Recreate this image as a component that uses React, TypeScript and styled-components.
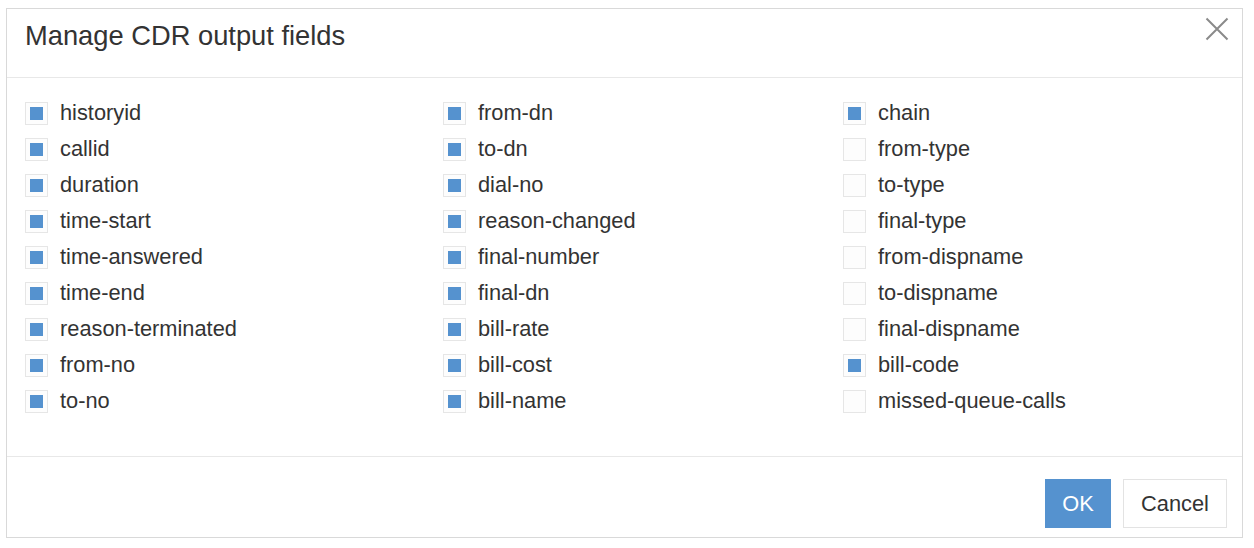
import React from "react";
import styled, { createGlobalStyle } from "styled-components";

const Global = createGlobalStyle`
  html, body { margin: 0; padding: 0; background: #fff; }
  body { font-family: "Liberation Sans", Arial, sans-serif; color: #333; }
`;

const Page = styled.div`
  padding: 8px 0 0 6px;
`;

const Dialog = styled.div`
  width: 1235px;
  height: 528px;
  border: 1px solid #d9d9d9;
  background: #fff;
  display: flex;
  flex-direction: column;
`;

const Header = styled.div`
  height: 69px;
  flex: none;
  box-sizing: border-box;
  border-bottom: 1px solid #e8e8e8;
  display: flex;
  align-items: flex-start;
  justify-content: space-between;
  padding: 11px 13px 0 18px;
`;

const Title = styled.h1`
  margin: 0;
  font-size: 27.3px;
  font-weight: normal;
  line-height: 32px;
  color: #333;
`;

const Close = styled.button`
  border: 0;
  background: none;
  padding: 0;
  margin-top: -3px;
  width: 24px;
  height: 24px;
  cursor: pointer;
  display: flex;
`;

const Body = styled.div`
  flex: 1;
  box-sizing: border-box;
  border-bottom: 1px solid #e8e8e8;
  padding: 17px 18px 0 18px;
  display: grid;
  grid-template-columns: 418px 400px 1fr;
  grid-auto-flow: column;
  grid-template-rows: repeat(9, 36px);
  align-content: start;
`;

const Item = styled.label`
  display: flex;
  align-items: center;
  gap: 12px;
  font-size: 21.8px;
  color: #333;
  cursor: pointer;
`;

const Box = styled.span<{ $on: boolean }>`
  width: 23px;
  height: 23px;
  box-sizing: border-box;
  border: 1px solid #e6e6e6;
  background: #fdfdfd;
  display: flex;
  align-items: center;
  justify-content: center;
  flex: none;
  &::after {
    content: "";
    width: 13px;
    height: 13px;
    background: ${(p) => (p.$on ? "#5592cf" : "transparent")};
  }
`;

const Footer = styled.div`
  height: 80px;
  flex: none;
  display: flex;
  justify-content: flex-end;
  align-items: flex-start;
  gap: 12px;
  padding: 22px 15px 0 0;
  box-sizing: border-box;
`;

const Button = styled.button<{ $primary?: boolean }>`
  height: 49px;
  padding: 0 ${(p) => (p.$primary ? "16px" : "17px")};
  font-family: "Liberation Sans", Arial, sans-serif;
  font-size: 21.8px;
  border: 1px solid ${(p) => (p.$primary ? "#5592cf" : "#e3e3e3")};
  background: ${(p) => (p.$primary ? "#5592cf" : "#fff")};
  color: ${(p) => (p.$primary ? "#fff" : "#333")};
  cursor: pointer;
  min-width: ${(p) => (p.$primary ? "66px" : "104px")};
`;

const fields: [string, boolean][] = [
  ["historyid", true],
  ["callid", true],
  ["duration", true],
  ["time-start", true],
  ["time-answered", true],
  ["time-end", true],
  ["reason-terminated", true],
  ["from-no", true],
  ["to-no", true],
  ["from-dn", true],
  ["to-dn", true],
  ["dial-no", true],
  ["reason-changed", true],
  ["final-number", true],
  ["final-dn", true],
  ["bill-rate", true],
  ["bill-cost", true],
  ["bill-name", true],
  ["chain", true],
  ["from-type", false],
  ["to-type", false],
  ["final-type", false],
  ["from-dispname", false],
  ["to-dispname", false],
  ["final-dispname", false],
  ["bill-code", true],
  ["missed-queue-calls", false],
];

export default function App() {
  const [state, setState] = React.useState(fields);
  return (
    <Page>
      <Global />
      <Dialog>
        <Header>
          <Title>Manage CDR output fields</Title>
          <Close aria-label="Close">
            <svg width="24" height="24" viewBox="0 0 24 24">
              <path d="M1.5 1.5 L22.5 22.5 M22.5 1.5 L1.5 22.5" stroke="#8a8a8a" strokeWidth="2" fill="none" />
            </svg>
          </Close>
        </Header>
        <Body>
          {state.map(([name, on], i) => (
            <Item
              key={name}
              onClick={() =>
                setState((s) => s.map((f, j) => (j === i ? [f[0], !f[1]] : f)) as [string, boolean][])
              }
            >
              <Box $on={on} />
              {name}
            </Item>
          ))}
        </Body>
        <Footer>
          <Button $primary>OK</Button>
          <Button>Cancel</Button>
        </Footer>
      </Dialog>
    </Page>
  );
}
